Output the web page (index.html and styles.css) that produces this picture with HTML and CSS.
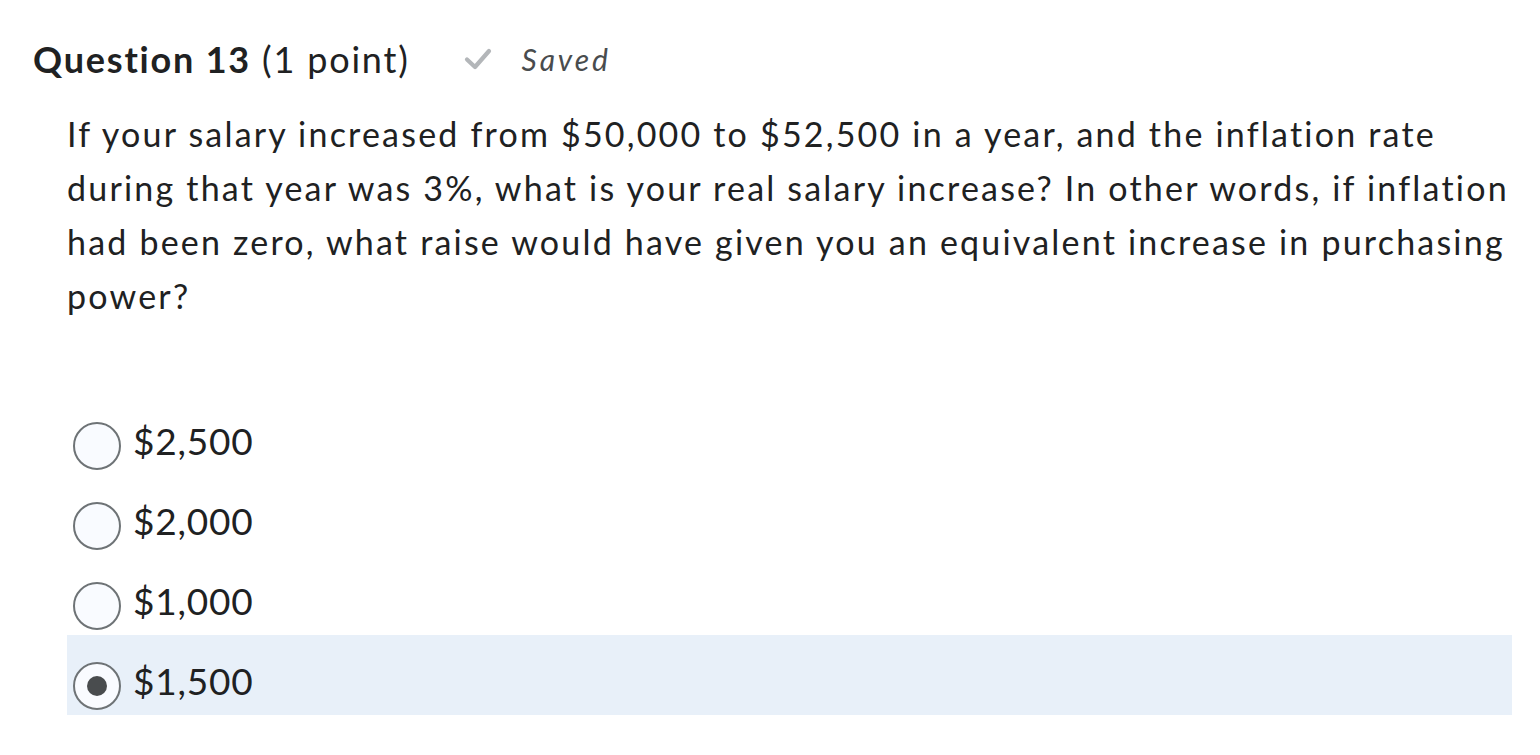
FILE: index.html
```html
<!DOCTYPE html>
<html lang="en">
<head>
<meta charset="utf-8">
<title>Question 13</title>
<link rel="stylesheet" href="styles.css">
</head>
<body>
<main class="quiz">
  <header class="q-header">
    <h2 class="q-title"><strong>Question 13</strong> <span class="q-points">(1 point)</span></h2>
    <span class="q-status">
      <svg class="q-check" viewBox="0 0 28 22" width="28" height="22" aria-hidden="true">
        <path d="M3 11.5 L11 19 L25 3" fill="none" stroke="#b3b6b9" stroke-width="4.2" stroke-linecap="round" stroke-linejoin="round"/>
      </svg>
      <em class="q-saved">Saved</em>
    </span>
  </header>
  <p class="q-text">If your salary increased from $50,000 to $52,500 in a year, and the inflation rate during that year was 3%, what is your real salary increase? In other words, if inflation had been zero, what raise would have given you an equivalent increase in purchasing power?</p>
  <ul class="options">
    <li class="option"><span class="radio"></span><span class="opt-label">$2,500</span></li>
    <li class="option"><span class="radio"></span><span class="opt-label">$2,000</span></li>
    <li class="option"><span class="radio"></span><span class="opt-label">$1,000</span></li>
    <li class="option option-selected"><span class="radio radio-checked"></span><span class="opt-label">$1,500</span></li>
  </ul>
</main>
</body>
</html>
```
FILE: styles.css
```css
html, body {
  margin: 0;
  padding: 0;
  background: #ffffff;
}
body {
  font-family: Lato, "Noto Sans", sans-serif;
  color: #202122;
  font-variant-ligatures: none;
}
.quiz {
  padding: 30px 28px 0 33px;
}
.q-header {
  display: flex;
  align-items: center;
  gap: 54px;
  height: 58px;
}
.q-title {
  margin: 0;
  font-size: 36px;
  font-weight: 400;
  line-height: 58px;
  letter-spacing: 1.8px;
}
.q-title strong {
  font-weight: 700;
}
.q-status {
  display: flex;
  align-items: center;
  gap: 30px;
  color: #494c4e;
}
.q-check {
  display: block;
}
.q-saved {
  font-size: 30px;
  font-style: italic;
  letter-spacing: 2.9px;
}
.q-text {
  margin: 19px 0 0 34px;
  font-size: 34px;
  line-height: 54px;
  letter-spacing: 2.2px;
}
.options {
  list-style: none;
  margin: 72px 0 0 34px;
  padding: 0;
}
.option {
  display: flex;
  align-items: center;
  gap: 12px;
  height: 80px;
  box-sizing: border-box;
  padding: 10px 6px 0;
  font-size: 37px;
  letter-spacing: 0.8px;
}
.option-selected {
  background: #e8f0f9;
}
.radio {
  box-sizing: border-box;
  width: 48px;
  height: 48px;
  border: 2px solid #6e7376;
  border-radius: 50%;
  background: #f9fbff;
  display: flex;
  align-items: center;
  justify-content: center;
  margin-top: 12px;
}
.radio-checked::after {
  content: "";
  width: 20px;
  height: 20px;
  border-radius: 50%;
  background: #494c4e;
}
.opt-label {
  line-height: 1;
}
```
